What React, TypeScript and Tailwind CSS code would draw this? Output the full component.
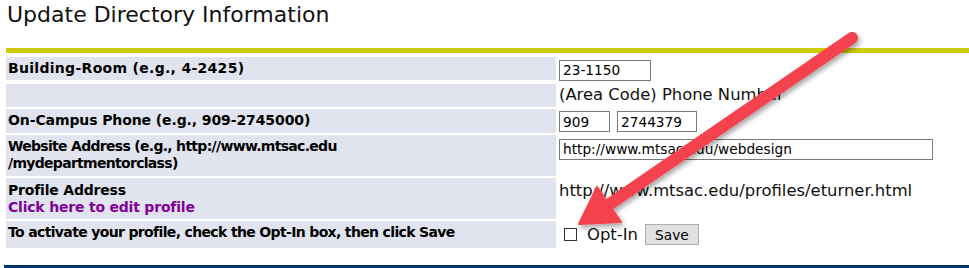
import React from 'react'

const label = "bg-[#e1e4ee] pl-[2px] pt-[2px] text-[14px] leading-[17px] font-bold text-black"
const input = "h-[21px] border border-[#7a7a7a] bg-white px-[3px] text-[13.7px] text-black outline-none"

export default function App() {
  return (
    <div className="relative w-[969px] h-[268px] overflow-hidden bg-white" style={{ fontFamily: '"DejaVu Sans", Verdana, sans-serif' }}>
      {/* Title */}
      <div className="pl-[7px] pt-[2px] h-[48px]">
        <h1 className="text-[22px] leading-[26px] font-normal text-[#111]">Update Directory Information</h1>
      </div>
      <div className="ml-[6px] h-[5px] bg-[#cccc00]" />

      {/* Form rows */}
      <div className="ml-[6px] mt-[4px] grid grid-cols-[550px_1fr] gap-x-[3px] gap-y-[2px]">
        <div className={`${label} h-[23px] pt-[3px] tracking-[0.3px]`}>Building-Room (e.g., 4-2425)</div>
        <div className="pt-[1px]">
          <input className={`${input} w-[92px]`} defaultValue="23-1150" />
        </div>

        <div className={`${label} h-[23px]`} />
        <div className="text-[16.4px] leading-[22px] text-[#111]">(Area Code) Phone Number</div>

        <div className={`${label} h-[24px] pt-[3px] tracking-[-0.1px]`}>On-Campus Phone (e.g., 909-2745000)</div>
        <div className="pt-[2px] flex gap-[7px]">
          <input className={`${input} w-[51px]`} defaultValue="909" />
          <input className={`${input} w-[80px]`} defaultValue="2744379" />
        </div>

        <div className={`${label} h-[41px] pt-[3px] tracking-[-0.7px]`}>
          Website Address (e.g., http://www.mtsac.edu
          <br />
          /mydepartmentorclass)
        </div>
        <div className="pt-[2px]">
          <input className={`${input} w-[374px]`} defaultValue="http://www.mtsac.edu/webdesign" />
        </div>

        <div className={`${label} h-[41px] pt-[4px] tracking-[-0.2px]`}>
          Profile Address
          <br />
          <a className="text-[#800099]">Click here to edit profile</a>
        </div>
        <div className="pt-[2px] text-[16.4px] leading-[22px] text-[#111]">http://www.mtsac.edu/profiles/eturner.html</div>

        <div className={`${label} h-[27px] pt-[3px] tracking-[-0.65px]`}>To activate your profile, check the Opt-In box, then click Save</div>
        <div className="flex items-center pl-[5px]">
          <input type="checkbox" className="appearance-none w-[13px] h-[13px] border border-[#333] bg-white" />
          <span className="ml-[10px] text-[16.4px] leading-[20px] text-[#111]">Opt-In</span>
          <button className="ml-[7px] w-[54px] h-[21px] bg-[#e1e1e1] border border-[#adadad] text-[13.7px] text-black">Save</button>
        </div>
      </div>

      <div className="ml-[4px] mt-[17px] h-[5px] bg-[#003366]" />

      {/* Annotation arrow */}
      <svg className="absolute left-0 top-0 pointer-events-none" width="969" height="268">
        <defs>
          <filter id="sh" x="-20%" y="-20%" width="140%" height="140%">
            <feDropShadow dx="2" dy="3" stdDeviation="2.5" floodColor="#000" floodOpacity="0.35" />
          </filter>
        </defs>
        <g filter="url(#sh)" fill="#f4424f" stroke="#f4424f">
          <line x1="852" y1="38" x2="604" y2="208" strokeWidth="12" strokeLinecap="round" />
          <polygon points="579,224 621,222 597,187" strokeWidth="2" strokeLinejoin="round" />
        </g>
      </svg>
    </div>
  )
}
